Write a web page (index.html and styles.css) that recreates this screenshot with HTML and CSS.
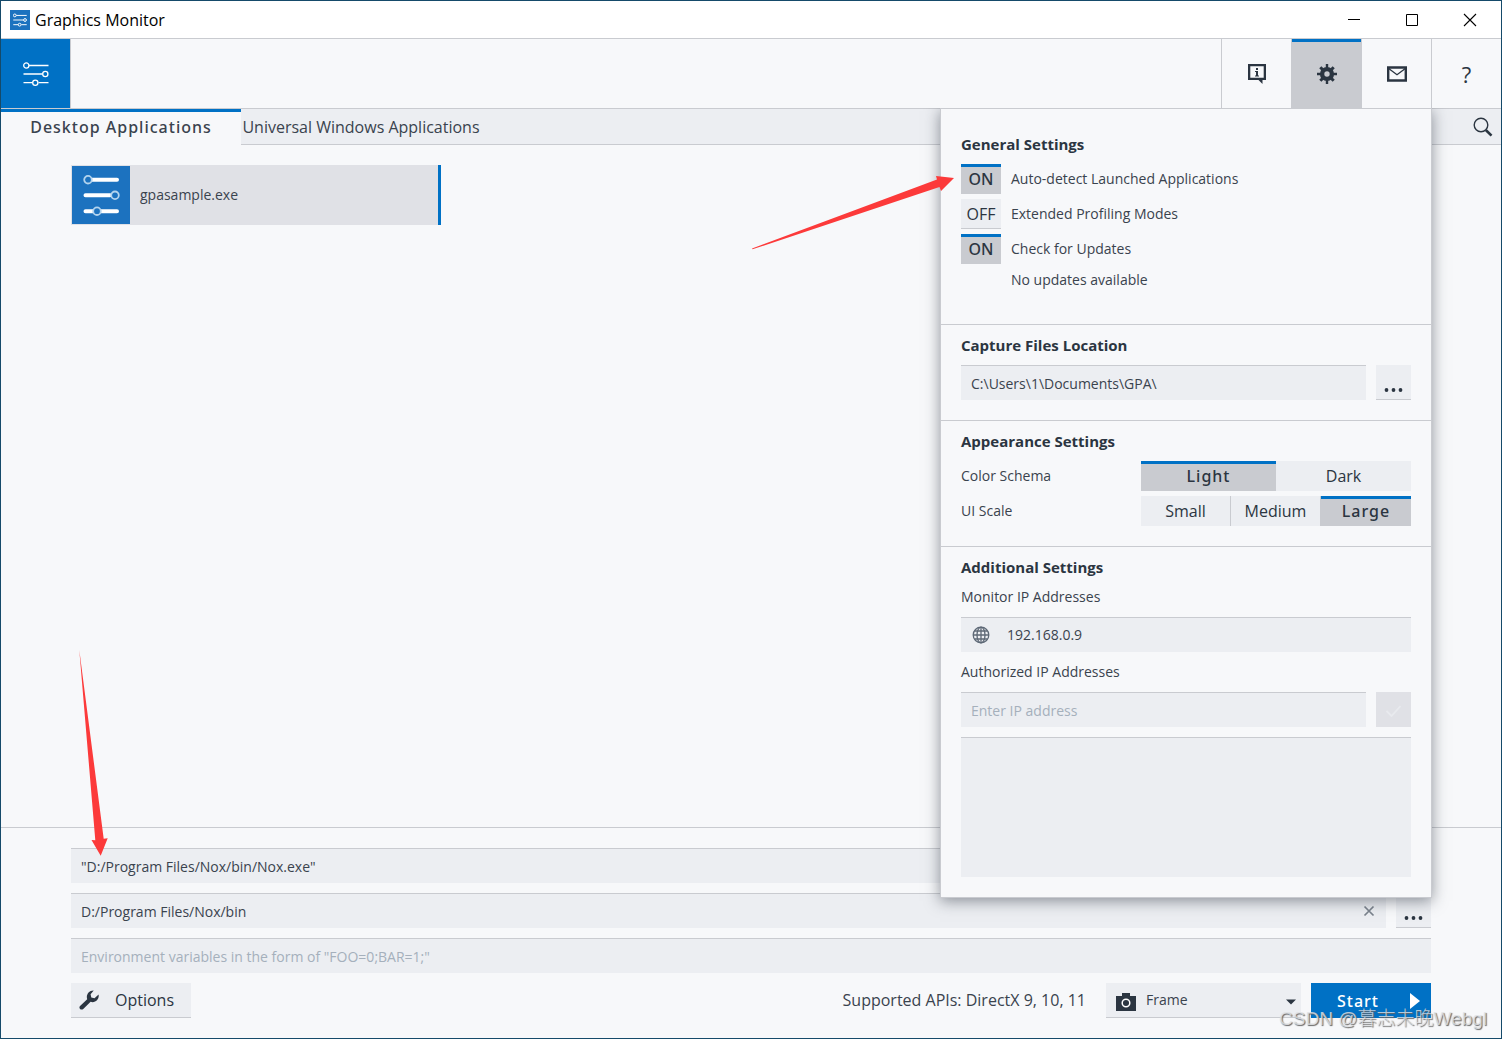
FILE: index.html
```html
<!DOCTYPE html>
<html lang="en">
<head>
<meta charset="utf-8">
<title>Graphics Monitor</title>
<meta name="viewport" content="width=device-width, initial-scale=1">
<link rel="stylesheet" href="styles.css">
</head>
<body>
<svg class="defs" width="0" height="0" aria-hidden="true">
  <symbol id="sliders" viewBox="0 0 26 24">
    <path d="M6 3.500H25.500M0.500 12H19.500M0.500 20.700H9.500M15.500 20.700H25.500" fill="none" stroke="currentColor"/>
    <circle cx="3.300" cy="3.500" r="2.600" fill="none" stroke="currentColor"/>
    <circle cx="22.300" cy="12" r="2.600" fill="none" stroke="currentColor"/>
    <circle cx="12.300" cy="20.700" r="2.600" fill="none" stroke="currentColor"/>
  </symbol>
</svg>
<div class="window">
  <header class="titlebar">
    <span class="app-icon"><svg width="14" height="14" stroke-width="1.800"><use href="#sliders"/></svg></span>
    <h1 class="title">Graphics Monitor</h1>
    <div class="window-controls">
      <button class="window-button" aria-label="Minimize"><svg width="14" height="14" viewBox="0 0 14 14"><path d="M1 6.500H13" stroke="#000"/></svg></button>
      <button class="window-button" aria-label="Maximize"><svg width="14" height="14" viewBox="0 0 14 14"><path d="M1.500 1.500H12.500V12.500H1.500Z" fill="none" stroke="#000"/></svg></button>
      <button class="window-button" aria-label="Close"><svg width="14" height="14" viewBox="0 0 14 14"><path d="M1 1L13 13M13 1L1 13" stroke="#000" stroke-width="1.100"/></svg></button>
    </div>
  </header>

  <nav class="toolbar">
    <button class="home-button" aria-label="Home"><svg width="26" height="24" stroke-width="1.300"><use href="#sliders"/></svg></button>
    <div class="toolbar-actions">
      <button class="tool-button" aria-label="Information">
        <svg width="20" height="20" viewBox="0 0 20 20"><path fill-rule="evenodd" d="M1 0H19V16H15.500V20L11.500 16H1ZM3.300 2.300V13.700H16.700V2.300Z" fill="#2b3541"/><path d="M9 4H11V6H9ZM8 7H11V11.500H12V12.500H8V11.500H9V8H8Z" fill="#2b3541"/></svg>
      </button>
      <button class="tool-button active" aria-label="Settings" aria-expanded="true">
        <svg width="20" height="20" viewBox="0 0 20 20"><g fill="none" stroke="#2b3541"><path d="M10 0V20M0 10H20" stroke-width="2.400" stroke-dasharray="5 10"/><path d="M3.300 3.300L16.700 16.700M16.700 3.300L3.300 16.700" stroke-width="3" stroke-dasharray="5 9"/><circle cx="10" cy="10" r="4.900" stroke-width="4.400"/></g></svg>
      </button>
      <button class="tool-button" aria-label="Mail">
        <svg width="20" height="16" viewBox="0 0 20 16"><path d="M1.200 1.500H18.800V14.500H1.200Z" fill="none" stroke="#2b3541" stroke-width="2.400"/><path d="M1 2L10 8.700L19 2" fill="none" stroke="#2b3541" stroke-width="1.300"/></svg>
      </button>
      <button class="tool-button help" aria-label="Help">?</button>
    </div>

    <section class="settings" aria-label="Settings">
      <div class="group group-general">
        <h2>General Settings</h2>
        <div class="toggles">
          <label class="toggle-row"><span class="toggle on"><input type="checkbox" checked>ON</span>Auto-detect Launched Applications</label>
          <label class="toggle-row"><span class="toggle"><input type="checkbox">OFF</span>Extended Profiling Modes</label>
          <label class="toggle-row"><span class="toggle on"><input type="checkbox" checked>ON</span>Check for Updates</label>
        </div>
        <p class="update-note">No updates available</p>
      </div>
      <div class="group">
        <h2><label for="capture">Capture Files Location</label></h2>
        <div class="field-row">
          <input class="field" id="capture" type="text" value="C:\Users\1\Documents\GPA\">
          <button class="square-button" aria-label="Browse"><svg width="19" height="4" viewBox="0 0 19 4"><g fill="#2b3541"><circle cx="2.500" cy="2" r="1.900"/><circle cx="9.500" cy="2" r="1.900"/><circle cx="16.500" cy="2" r="1.900"/></g></svg></button>
        </div>
      </div>
      <div class="group">
        <h2>Appearance Settings</h2>
        <div class="choices">
          <span id="schema">Color Schema</span>
          <div class="segments" role="radiogroup" aria-labelledby="schema">
            <label class="segment on"><input type="radio" name="schema" checked>Light</label>
            <label class="segment"><input type="radio" name="schema">Dark</label>
          </div>
          <span id="scale">UI Scale</span>
          <div class="segments" role="radiogroup" aria-labelledby="scale">
            <label class="segment"><input type="radio" name="scale">Small</label>
            <label class="segment"><input type="radio" name="scale">Medium</label>
            <label class="segment on"><input type="radio" name="scale" checked>Large</label>
          </div>
        </div>
      </div>
      <div class="group group-stack">
        <h2>Additional Settings</h2>
        <p>Monitor IP Addresses</p>
        <div class="field address">
          <svg width="18" height="18" viewBox="0 0 18 18"><g fill="none" stroke="#5d6876" stroke-width="1.300"><circle cx="9" cy="9" r="7.800"/><ellipse cx="9" cy="9" rx="4" ry="7.800"/><path d="M9 1V17M1 9H17M2.500 5H15.500M2.500 13H15.500"/></g></svg>
          <span>192.168.0.9</span>
        </div>
        <label for="authorized">Authorized IP Addresses</label>
        <div class="field-row">
          <input class="field" id="authorized" type="text" placeholder="Enter IP address">
          <button class="square-button disabled" aria-label="Add address" disabled><svg width="15" height="12" viewBox="0 0 15 12"><path d="M0.500 6L5.500 11L14.500 1" fill="none" stroke="#e8eaee" stroke-width="1.800"/></svg></button>
        </div>
        <div class="address-list"></div>
      </div>
      <svg class="arrow arrow-right" width="202" height="74" viewBox="0 0 202 74" aria-hidden="true"><path d="M0 72.500L185 3.500L184 0L202 2L189 15L187.500 11L0.500 73.300Z" fill="#fc3a3a"/></svg>
    </section>
  </nav>

  <div class="tabs" role="tablist">
    <button class="tab on" role="tab" aria-selected="true">Desktop Applications</button>
    <button class="tab" role="tab" aria-selected="false">Universal Windows Applications</button>
    <button class="search-button" aria-label="Search"><svg width="20" height="20" viewBox="0 0 20 20"><circle cx="8" cy="8" r="6.800" fill="none" stroke="#2b3541" stroke-width="1.400"/><path d="M12.800 13L18.500 18.700" stroke="#2b3541" stroke-width="2.600"/></svg></button>
  </div>

  <main class="applications">
    <button class="application">
      <span class="application-icon">
        <svg width="38" height="44" viewBox="0 0 38 44"><g stroke="#fff" stroke-width="4" stroke-linecap="round"><path d="M10 6.700H35M3.500 22.300H28M3.500 38.200H35"/></g><g fill="#1c72bf" stroke="#b3d4ee" stroke-width="1.800"><circle cx="6" cy="6.700" r="3.800"/><circle cx="33" cy="22.300" r="3.800"/><circle cx="15" cy="38.200" r="3.800"/></g></svg>
      </span>
      <span class="application-name">gpasample.exe</span>
    </button>
  </main>

  <form class="launch">
    <input class="field" type="text" aria-label="Application path" value='"D:/Program Files/Nox/bin/Nox.exe"'>
    <div class="field-row">
      <div class="clearable">
        <input class="field" type="text" aria-label="Working directory" value="D:/Program Files/Nox/bin">
        <button class="clear-button" type="button" aria-label="Clear"><svg width="12" height="12" viewBox="0 0 12 12"><path d="M1.500 1.500L10.500 10.500M10.500 1.500L1.500 10.500" stroke="#7b838d" stroke-width="1.700"/></svg></button>
      </div>
      <button class="square-button" type="button" aria-label="Browse"><svg width="19" height="4" viewBox="0 0 19 4"><g fill="#2b3541"><circle cx="2.500" cy="2" r="1.900"/><circle cx="9.500" cy="2" r="1.900"/><circle cx="16.500" cy="2" r="1.900"/></g></svg></button>
    </div>
    <input class="field" type="text" aria-label="Environment variables" placeholder='Environment variables in the form of "FOO=0;BAR=1;"'>
    <div class="launch-actions">
      <button class="options-button" type="button">
        <svg width="20" height="20" viewBox="0 0 20 20"><path d="M0.800 16.200L8.200 9.300C6.800 5.200 9.500 0.300 14.700 0.500L11.600 4.200L12.300 7.400L15.500 8.200L19.600 4.500C20.500 9.500 16.200 13.400 11.600 11.800L4 19.200C1.800 20.500 -0.500 18.300 0.800 16.200Z" fill="#2b3541"/></svg>
        Options
      </button>
      <span class="apis">Supported APIs: DirectX 9, 10, 11</span>
      <div class="mode">
        <svg class="mode-icon" width="20" height="18" viewBox="0 0 20 18"><path d="M0 3H6V0H14V3H20V18H0Z" fill="#2b3541"/><circle cx="10" cy="10" r="3.800" fill="none" stroke="#fff" stroke-width="1.500"/></svg>
        <select aria-label="Capture mode"><option>Frame</option></select>
        <svg class="mode-arrow" width="10" height="6" viewBox="0 0 10 6"><path d="M0 0.500H10L5 5.500Z" fill="#2b3541"/></svg>
      </div>
      <button class="start-button" type="button">Start<svg width="10" height="16" viewBox="0 0 10 16"><path d="M0 0L10 8L0 16Z" fill="#fff"/></svg></button>
    </div>
    <svg class="arrow arrow-down" width="30" height="206" viewBox="0 0 30 206" aria-hidden="true"><path d="M0.300 0L16.300 190.300L12.500 190L21.700 205.700L28.700 188.300L24.700 188.700Z" fill="#fc3a3a"/></svg>
  </form>
  <div class="watermark">CSDN @暮志未晚Webgl</div>
</div>
</body>
</html>
```
FILE: styles.css
```css
*, *::before, *::after { box-sizing: border-box; }

body {
  margin: 0;
  font: 14px/20px "Open Sans", "Noto Sans CJK SC", sans-serif;
  color: #3a434e;
}

h1, h2, p { margin: 0; }

button, input, select {
  margin: 0;
  padding: 0;
  border: 0;
  border-radius: 0;
  background: none;
  font: inherit;
  color: inherit;
}

svg { display: block; flex: none; }
.defs { position: absolute; }

.window {
  position: relative;
  display: flex;
  flex-direction: column;
  min-height: 100vh;
  border: 1px solid #154a6a;
  background: #f7f8fa;
}

/* Title bar */
.titlebar {
  display: flex;
  align-items: center;
  height: 38px;
  padding-left: 9px;
  border-bottom: 1px solid #c9cbd0;
  background: #fff;
}
.app-icon {
  display: grid;
  place-items: center;
  width: 20px;
  height: 20px;
  margin-right: 5px;
  background: #1c72bf;
  color: #fff;
}
.title { font-size: 16px; font-weight: 400; color: #000; }
.window-controls { display: flex; margin-left: auto; padding-right: 2px; }
.window-button { display: grid; place-items: center; width: 58px; height: 36px; }

/* Toolbar */
.toolbar {
  position: relative;
  z-index: 1;
  display: flex;
  height: 70px;
  border-bottom: 1px solid #c9cbd0;
}
.home-button {
  display: grid;
  place-items: center;
  width: 70px;
  border-right: 1px solid #c9cbd0;
  background: #0071c5;
  color: #fff;
}
.toolbar-actions { display: flex; margin-left: auto; }
.tool-button {
  display: grid;
  place-items: center;
  width: 70px;
  border-left: 1px solid #c9cbd0;
}
.tool-button.active {
  background: #c9cbd0;
  box-shadow: inset 0 3px #0071c5, 1px 0 #c9cbd0;
}
.help { font-size: 22px; color: #2b3541; }

/* Settings panel */
.settings {
  position: absolute;
  top: 69px;
  right: 69px;
  width: 492px;
  border: 1px solid #c9cbd0;
  background: #f7f8fa;
  box-shadow: 0 3px 14px rgba(40, 48, 60, 0.5);
  clip-path: inset(0 -30px -30px -200px);
}
.group { padding: 10px 20px 20px; }
.group + .group { border-top: 1px solid #c9cbd0; }
.group h2 {
  margin-bottom: 10px;
  font-size: 15px;
  line-height: 20px;
  font-weight: 700;
  color: #2b3541;
}
.group-general { padding-top: 25px; padding-bottom: 34px; }
.toggles { display: grid; gap: 5px; }
.toggle-row { display: flex; align-items: center; gap: 10px; }
.toggle, .segment {
  position: relative;
  display: grid;
  place-items: center;
  height: 30px;
  background: #eceef2;
  font-size: 16px;
  color: #2b3541;
}
.toggle { width: 40px; border-bottom: 1px solid #c9cbd0; }
.toggle.on, .segment.on {
  border: 0;
  background: #c9cbd0;
  box-shadow: inset 0 3px #0071c5;
  font-family: "Noto Sans", "Open Sans", sans-serif;
  font-weight: 500;
}
.toggle input, .segment input {
  position: absolute;
  inset: 0;
  appearance: none;
}
.update-note { margin: 6px 0 0 50px; }
.field-row { display: flex; gap: 10px; }
.field {
  flex: 1;
  min-width: 0;
  width: 100%;
  height: 35px;
  padding: 0 10px;
  border-top: 1px solid #c9cbd0;
  background: #eceef2;
}
.field::placeholder { color: #a5b0bc; opacity: 1; }
.square-button {
  display: flex;
  align-items: flex-end;
  justify-content: center;
  width: 35px;
  height: 35px;
  padding-bottom: 7px;
  border-bottom: 1px solid #c9cbd0;
  background: #eceef2;
}
.square-button.disabled { align-items: center; padding: 3px 0 0; border: 0; background: #e0e1e6; }
.choices {
  display: grid;
  grid-template-columns: 180px 1fr;
  gap: 5px 0;
  align-items: center;
}
.segments { display: grid; grid-auto-flow: column; grid-auto-columns: 1fr; }
.segment:not(.on, :last-child) { border-right: 1px solid #c9cbd0; }
.segment.on { letter-spacing: 1px; }
.group-stack { display: grid; gap: 10px; }
.group-stack h2 { margin: 0; }
.address { display: flex; align-items: center; gap: 17px; padding-left: 11px; }
.address-list { height: 140px; border-top: 1px solid #c9cbd0; background: #eceef2; }

/* Tabs */
.tabs { display: flex; height: 36px; background: #eceef2; }
.tab {
  width: 240px;
  border-bottom: 1px solid #c9cbd0;
  font-size: 16px;
  white-space: nowrap;
}
.tab.on {
  border: 0;
  background: #f7f8fa;
  box-shadow: inset 0 3px #0071c5;
  font-family: "Noto Sans", "Open Sans", sans-serif;
  font-weight: 500;
  letter-spacing: 1px;
}
.search-button {
  display: flex;
  flex: 1;
  align-items: center;
  justify-content: flex-end;
  padding-right: 8px;
  border-bottom: 1px solid #c9cbd0;
}

/* Application list */
.applications { flex: 1; padding: 20px 70px; }
.application {
  display: flex;
  align-items: center;
  gap: 10px;
  width: 370px;
  height: 60px;
  padding-left: 1px;
  border-right: 3px solid #0071c5;
  background: #e0e1e6;
}
.application-icon {
  display: grid;
  place-items: center;
  width: 58px;
  height: 58px;
  background: #1c72bf;
}

/* Launch form */
.launch {
  position: relative;
  display: grid;
  gap: 10px;
  padding: 20px 70px;
  border-top: 1px solid #c9cbd0;
}
.clearable { position: relative; flex: 1; }
.clear-button { position: absolute; top: 12px; right: 11px; }
.launch-actions { display: flex; height: 35px; }
.options-button {
  display: flex;
  align-items: center;
  gap: 16px;
  width: 120px;
  padding-left: 8px;
  border-bottom: 1px solid #c9cbd0;
  background: #eceef2;
  font-size: 16px;
  color: #2b3541;
}
.apis { margin: 0 20px 0 auto; font-size: 16px; line-height: 35px; }
.mode {
  position: relative;
  width: 195px;
  margin-right: 10px;
  border-bottom: 1px solid #c9cbd0;
  background: #eceef2;
}
.mode select { width: 100%; height: 100%; padding-left: 40px; appearance: none; }
.mode-icon { position: absolute; top: 10px; left: 10px; }
.mode-arrow { position: absolute; top: 16px; right: 5px; pointer-events: none; }
.start-button {
  display: flex;
  align-items: center;
  justify-content: flex-end;
  gap: 31px;
  width: 120px;
  padding-right: 11px;
  background: #0071c5;
  color: #fff;
  font-family: "Noto Sans", "Open Sans", sans-serif;
  font-size: 16px;
  font-weight: 500;
  letter-spacing: 1px;
}

/* Annotations */
.arrow { position: absolute; pointer-events: none; }
.arrow-right { top: 67px; left: -189px; }
.arrow-down { top: -178px; left: 78px; }
.watermark {
  position: absolute;
  right: 14px;
  bottom: 7px;
  font: 19px/24px "Liberation Sans", "Noto Sans CJK SC", sans-serif;
  font-weight: 300;
  color: rgba(225, 227, 230, 0.8);
  text-shadow: 1px 1px 1px #666;
  white-space: nowrap;
}
```
